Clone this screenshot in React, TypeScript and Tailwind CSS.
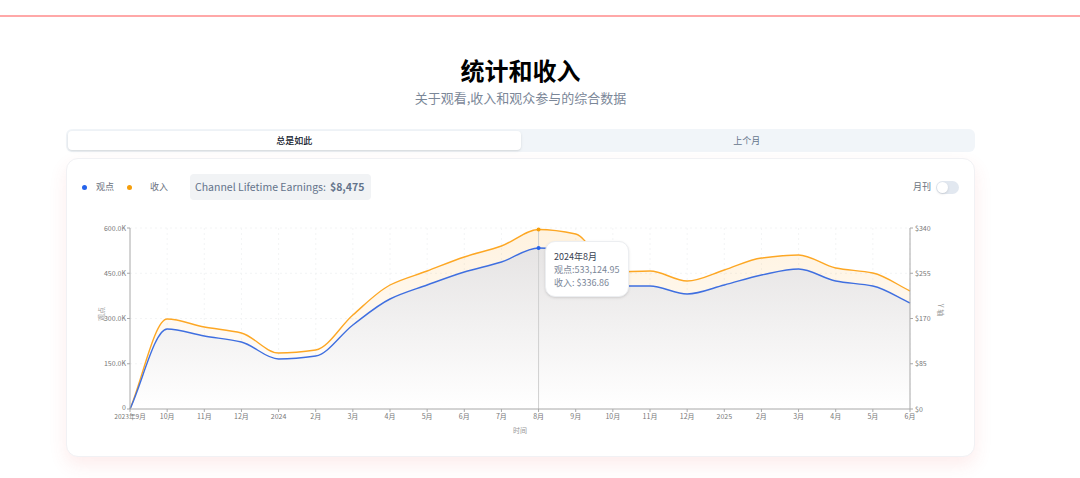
const blue = [409,329,336,342,359,356,325,299,285,272,262,248,252,286,286,294,285,275,269,281,286,303];
const orange = [409,319,327,333,353,350,315,285,271,257,246,229.5,234,272,271,281,270,258,255,268,273,291];
const X0 = 130, X1 = 910, Y0 = 228, YB = 409, OX = 66, OY = 158;
const px = (i: number) => X0 + ((X1 - X0) * i) / 21;
const xLabels = ["2023年9月","10月","11月","12月","2024","2月","3月","4月","5月","6月","7月","8月","9月","10月","11月","12月","2025","2月","3月","4月","5月","6月"];
const ticksL = ["0","150.0K","300.0K","450.0K","600.0K"];
const ticksR = ["$0","$85","$170","$255","$340"];
const yTick = (i: number) => YB - ((YB - Y0) * i) / 4;

function monotone(ys: number[]) {
  const n = ys.length;
  const h = (X1 - X0) / 21;
  const d = ys.slice(1).map((y, i) => (y - ys[i]) / h);
  const m = ys.map((_, i) => {
    if (i === 0) return d[0];
    if (i === n - 1) return d[n - 2];
    if (d[i - 1] * d[i] <= 0) return 0;
    return (2 * d[i - 1] * d[i]) / (d[i - 1] + d[i]);
  });
  let p = `M${px(0)},${ys[0]}`;
  for (let i = 0; i < n - 1; i++) {
    p += `C${px(i) + h / 3},${ys[i] + (m[i] * h) / 3} ${px(i + 1) - h / 3},${ys[i + 1] - (m[i + 1] * h) / 3} ${px(i + 1)},${ys[i + 1]}`;
  }
  return p;
}

const font = { fontFamily: '"Noto Sans CJK SC", sans-serif' };

function Chart() {
  const bl = monotone(blue);
  const or = monotone(orange);
  const close = `L${X1},${YB}L${X0},${YB}Z`;
  return (
    <svg width={909} height={299} viewBox={`${OX} ${OY} 909 299`} className="absolute left-[-1px] top-[-1px]" style={font}>
      <defs>
        <linearGradient id="g1" x1="0" y1="0" x2="0" y2="1">
          <stop offset="0%" stopColor="#ffa41b" stopOpacity={0.14} />
          <stop offset="100%" stopColor="#ffa41b" stopOpacity={0} />
        </linearGradient>
        <linearGradient id="g2" x1="0" y1="0" x2="0" y2="1">
          <stop offset="0%" stopColor="#e6e4e4" />
          <stop offset="100%" stopColor="#ffffff" />
        </linearGradient>
      </defs>
      {[1, 2, 3, 4].map((i) => (
        <line key={i} x1={X0} x2={X1} y1={yTick(i)} y2={yTick(i)} stroke="#f0f1f3" strokeWidth={0.8} strokeDasharray="2 3" />
      ))}
      {xLabels.slice(1).map((_, i) => (
        <line key={i} x1={px(i + 1)} x2={px(i + 1)} y1={Y0} y2={YB} stroke="#f0f1f3" strokeWidth={0.8} strokeDasharray="2 3" />
      ))}
      <path d={or + close} fill="url(#g1)" />
      <path d={bl + close} fill="url(#g2)" />
      <path d={or} fill="none" stroke="#fda724" strokeWidth={1.4} />
      <path d={bl} fill="none" stroke="#3f6fe0" strokeWidth={1.4} />
      <line x1={px(11)} x2={px(11)} y1={Y0} y2={YB} stroke="#cfcfcf" strokeWidth={1} />
      <circle cx={px(11)} cy={orange[11]} r={2} fill="#f59e0b" />
      <circle cx={px(11)} cy={blue[11]} r={2} fill="#2563eb" />
      <path d={`M${X0},${Y0}V${YB}H${X1}V${Y0}`} fill="none" stroke="#a8a8a8" strokeWidth={1} />
      {ticksL.map((t, i) => (
        <g key={t}>
          <line x1={X0 - 3} x2={X0} y1={yTick(i)} y2={yTick(i)} stroke="#a8a8a8" />
          <text x={X0 - 4} y={yTick(i) + (i === 0 ? 1 : 2.5)} textAnchor="end" fontSize={7} fill="#777">{t}</text>
        </g>
      ))}
      {ticksR.map((t, i) => (
        <g key={t}>
          <line x1={X1} x2={X1 + 3} y1={yTick(i)} y2={yTick(i)} stroke="#a8a8a8" />
          <text x={X1 + 5} y={yTick(i) + 2.5} fontSize={7} fill="#777">{t}</text>
        </g>
      ))}
      {xLabels.map((t, i) => (
        <g key={i}>
          <line x1={px(i)} x2={px(i)} y1={YB} y2={YB + 3} stroke="#a8a8a8" />
          <text x={px(i)} y={YB + 10} textAnchor="middle" fontSize={i === 0 ? 6.6 : 7} fill="#777">{t}</text>
        </g>
      ))}
      <text x={520} y={433} textAnchor="middle" fontSize={7} fill="#999">时间</text>
      <text transform="translate(104,314) rotate(-90)" textAnchor="middle" fontSize={7} fill="#999">观点</text>
      <text transform="translate(938,310) rotate(90)" textAnchor="middle" fontSize={7} fill="#999">Y 轴</text>
    </svg>
  );
}

export default function App() {
  return (
    <div className="w-[1080px] h-[478px] bg-white overflow-hidden" style={font}>
      <div className="mt-[15px] h-[2px] bg-[#ffa8a8]" />
      <div className="ml-[66px] w-[909px]">
        <h1 className="mt-[37px] text-center text-2xl leading-8 font-bold text-black">统计和收入</h1>
        <p className="mt-[2px] text-center text-[13px] leading-5 text-[#7b8798]">关于观看,收入和观众参与的综合数据</p>
        <div className="mt-[21px] h-[23px] rounded-md bg-[#f1f5f9] p-[2px] flex text-[9px] leading-[19px]">
          <div className="flex-1 rounded bg-white text-center font-medium text-[#0f172a] shadow-sm">总是如此</div>
          <div className="flex-1 text-center text-[#64748b]">上个月</div>
        </div>
        <div className="relative mt-[6px] h-[299px] rounded-xl border border-[#f1f1f4] bg-white shadow-[0_8px_18px_rgba(239,68,68,0.1)]">
          <Chart />
          <div className="relative flex items-center justify-between pl-[15px] pr-[15px] pt-[15px]">
            <div className="flex items-center">
              <span className="h-[5px] w-[5px] rounded-full bg-[#2563eb]" />
              <span className="ml-[9px] text-[9px] text-[#6b7280]">观点</span>
              <span className="ml-[13px] h-[5px] w-[5px] rounded-full bg-[#f59e0b]" />
              <span className="ml-[18px] text-[9px] text-[#6b7280]">收入</span>
              <div className="ml-[22px] flex h-[26px] w-[181px] items-center gap-[4px] rounded bg-[#f1f3f5] px-[5px] text-[10.5px] text-[#64748b]">
                <span>Channel Lifetime Earnings:</span>
                <span className="font-semibold">$8,475</span>
              </div>
            </div>
            <div className="flex items-center gap-[5px]">
              <span className="text-[9px] text-[#6b7280]">月刊</span>
              <span className="flex h-[13px] w-[23px] items-center rounded-full bg-[#e2e8f0]">
                <span className="h-[11px] w-[11px] translate-x-[1px] rounded-full bg-white shadow-sm" />
              </span>
            </div>
          </div>
          <div className="absolute left-[478px] top-[82px] h-[56px] w-[84px] rounded-[10px] border border-[#eceef1] bg-white pl-[8px] pt-[8px] text-[9px] leading-[13px] text-[#7b8798] shadow-sm">
            <div className="text-[#374151]">2024年8月</div>
            <div>观点:533,124.95</div>
            <div>收入: $336.86</div>
          </div>
        </div>
      </div>
    </div>
  );
}
